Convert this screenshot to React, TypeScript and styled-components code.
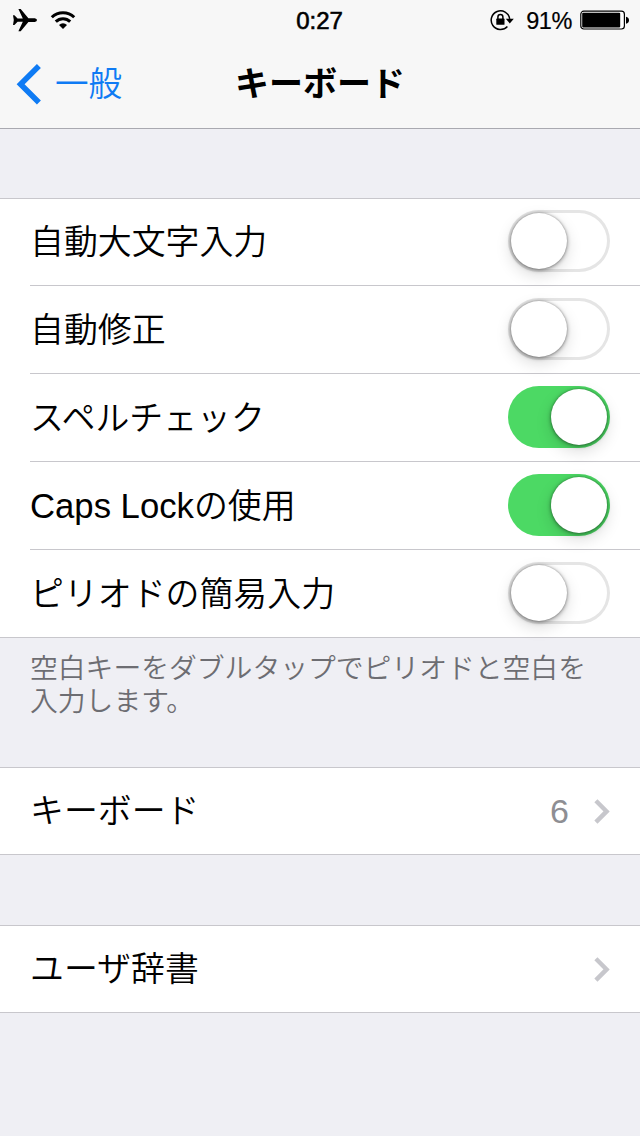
import React from "react";
import styled, { createGlobalStyle } from "styled-components";

const GlobalStyle = createGlobalStyle`
  * { box-sizing: border-box; }
  body {
    margin: 0;
    background: #efeff4;
    color: #000;
    font-family: "Liberation Sans", "Noto Sans CJK JP", sans-serif;
    -webkit-font-smoothing: antialiased;
  }
`;

const Screen = styled.main`
  display: flex;
  flex-direction: column;
  width: 640px;
  min-height: 1136px;
  background: #efeff4;
  overflow: hidden;
`;

const Header = styled.header`
  height: 129px;
  background: #f7f7f7;
  border-bottom: 1px solid #a9a9b0;
`;

const StatusBar = styled.div`
  display: grid;
  grid-template-columns: 1fr auto 1fr;
  align-items: center;
  height: 40px;
  padding: 0 11px 0 12px;
`;

const StatusSide = styled.div<{ $end?: boolean }>`
  display: flex;
  align-items: center;
  justify-content: ${(p) => (p.$end ? "flex-end" : "flex-start")};
  svg { display: block; }
`;

const Clock = styled.time`
  font-size: 24px;
  line-height: 26px;
  padding-top: 2px;
  margin-right: 2px;
  -webkit-text-stroke: 0.6px #000;
`;

const Percent = styled.span`
  font-size: 23.5px;
  line-height: 26px;
  padding-top: 2px;
  margin: 0 8px 0 12px;
  letter-spacing: -0.4px;
  -webkit-text-stroke: 0.2px #000;
`;

const NavBar = styled.nav`
  display: grid;
  grid-template-columns: 1fr auto 1fr;
  align-items: center;
  height: 88px;
  padding: 0 16px;
`;

const BackButton = styled.button`
  display: flex;
  align-items: center;
  gap: 12px;
  padding: 0;
  border: 0;
  background: none;
  color: #0f7bf4;
  font: 350 33.6px/50px "Noto Sans CJK JP", sans-serif;
  svg { display: block; }
`;

const BackLabel = styled.span`
  margin-top: -4px;
`;

const Title = styled.h1`
  margin: -4px 0 0;
  font: 700 34px/50px "Noto Sans CJK JP", sans-serif;
`;

const Group = styled.section<{ $gap: number }>`
  margin-top: ${(p) => p.$gap}px;
  background: #fff;
  border-top: 1px solid #c8c7cc;
  border-bottom: 1px solid #c8c7cc;
`;

const Row = styled.div`
  display: flex;
  align-items: center;
  height: 88px;
  margin-left: 30px;
  padding-right: 30px;
  border-bottom: 1px solid #c8c7cc;
  &:first-child { height: 87px; }
  &:last-child { height: 87px; border-bottom: 0; }
  &:only-child { height: 86px; }
`;

const Label = styled.span`
  flex: 1;
  font-size: 33.9px;
  font-weight: 350;
  line-height: 50px;
  white-space: nowrap;
`;

const Latin = styled.span`
  font-size: 34.7px;
`;

const Detail = styled.span`
  margin-right: 24px;
  color: #8e8e93;
  font-size: 34px;
  line-height: 50px;
`;

const Switch = styled.button<{ $on: boolean }>`
  display: flex;
  justify-content: ${(p) => (p.$on ? "flex-end" : "flex-start")};
  width: 102px;
  height: 62px;
  margin-bottom: 2px;
  padding: 3px;
  border: 0;
  border-radius: 31px;
  background: ${(p) => (p.$on ? "#4cd964" : "#fff")};
  box-shadow: ${(p) => (p.$on ? "none" : "inset 0 0 0 3px #e5e5e5")};
`;

const Knob = styled.span`
  width: 56px;
  height: 56px;
  border-radius: 50%;
  background: #fff;
  box-shadow: 0 0 2px rgba(0, 0, 0, 0.25), 0 1px 4px rgba(0, 0, 0, 0.42), 0 6px 16px rgba(0, 0, 0, 0.15);
`;

const Note = styled.p`
  margin: 0;
  padding: 12px 30px 0;
  height: 129px;
  color: #6d6d72;
  font: 350 27.8px/33px "Noto Sans CJK JP", sans-serif;
`;

const Airplane = () => (
  <svg width="26" height="24" viewBox="0 0 26 24">
    <path d="M1 7.3h1.4L5.6 10.4h5.2L6.4 1h2.3l7.7 9.2h6.4q2.2.3 2.2 1.9t-2.2 1.9h-6.4L8.7 23.2H6.4l4.4-9.4H5.6L2.4 16.9H1l.8-4.8z" />
  </svg>
);

const Wifi = () => (
  <svg width="26" height="20" viewBox="0 0 26 20">
    <g fill="none" stroke="#000" strokeWidth="3">
      <path d="M1.8 7.2a16 16 0 0 1 22.4 0" />
      <path d="M5.8 11.6a10.3 10.3 0 0 1 14.4 0" />
    </g>
    <path d="M13 19l-4-4.1a5.8 5.8 0 0 1 8 0z" />
  </svg>
);

const RotationLock = () => (
  <svg width="24" height="22" viewBox="0 0 24 22">
    <path d="M17.4 17.4a9.3 9.3 0 1 1 2.3-7.6" fill="none" stroke="#000" strokeWidth="1.5" />
    <path d="M15.8 9.8h8l-4 4.6z" />
    <rect x="6.3" y="9.6" width="8.2" height="6.2" rx=".6" />
    <path d="M7.9 10.5V7.9a2.5 2.5 0 0 1 5 0v2.6" fill="none" stroke="#000" strokeWidth="1.5" />
  </svg>
);

const Battery = () => (
  <svg width="49" height="20" viewBox="0 0 49 20">
    <rect x=".8" y="1.2" width="43.6" height="17.8" rx="3" fill="#fff" stroke="#000" strokeWidth="1.2" />
    <rect x="2.2" y="2.7" width="38" height="14.8" rx="1" />
    <path d="M46 6.7q3 .8 3 3.5T46 13.7z" />
  </svg>
);

const BackChevron = () => (
  <svg width="27" height="42" viewBox="0 0 27 42">
    <path d="M22.9 2.9L4.6 21.2 22.9 39.5" fill="none" stroke="#0f7bf4" strokeWidth="5.6" />
  </svg>
);

const Disclosure = () => (
  <svg width="17" height="26" viewBox="0 0 17 26">
    <path d="M2.9 2.7L13.6 13.4 2.9 24.1" fill="none" stroke="#c7c7cc" strokeWidth="4.4" />
  </svg>
);

const toggles = [
  { latin: "", label: "自動大文字入力", on: false },
  { latin: "", label: "自動修正", on: false },
  { latin: "", label: "スペルチェック", on: true },
  { latin: "Caps Lock", label: "の使用", on: true },
  { latin: "", label: "ピリオドの簡易入力", on: false },
];

const WifiSlot = styled.span`
  margin-left: 12px;
`;

export default function App() {
  return (
    <Screen>
      <GlobalStyle />
      <Header>
        <StatusBar>
          <StatusSide>
            <Airplane />
            <WifiSlot><Wifi /></WifiSlot>
          </StatusSide>
          <Clock>0:27</Clock>
          <StatusSide $end>
            <RotationLock />
            <Percent>91%</Percent>
            <Battery />
          </StatusSide>
        </StatusBar>
        <NavBar>
          <BackButton>
            <BackChevron />
            <BackLabel>一般</BackLabel>
          </BackButton>
          <Title>キーボード</Title>
        </NavBar>
      </Header>
      <Group $gap={69}>
        {toggles.map((t) => (
          <Row key={t.label}>
            <Label>
              {t.latin && <Latin>{t.latin}</Latin>}
              {t.label}
            </Label>
            <Switch $on={t.on} role="switch" aria-checked={t.on} aria-label={t.latin + t.label}>
              <Knob />
            </Switch>
          </Row>
        ))}
      </Group>
      <Note>空白キーをダブルタップでピリオドと空白を入力します。</Note>
      <Group $gap={0}>
        <Row>
          <Label>キーボード</Label>
          <Detail>6</Detail>
          <Disclosure />
        </Row>
      </Group>
      <Group $gap={70}>
        <Row>
          <Label>ユーザ辞書</Label>
          <Disclosure />
        </Row>
      </Group>
    </Screen>
  );
}
